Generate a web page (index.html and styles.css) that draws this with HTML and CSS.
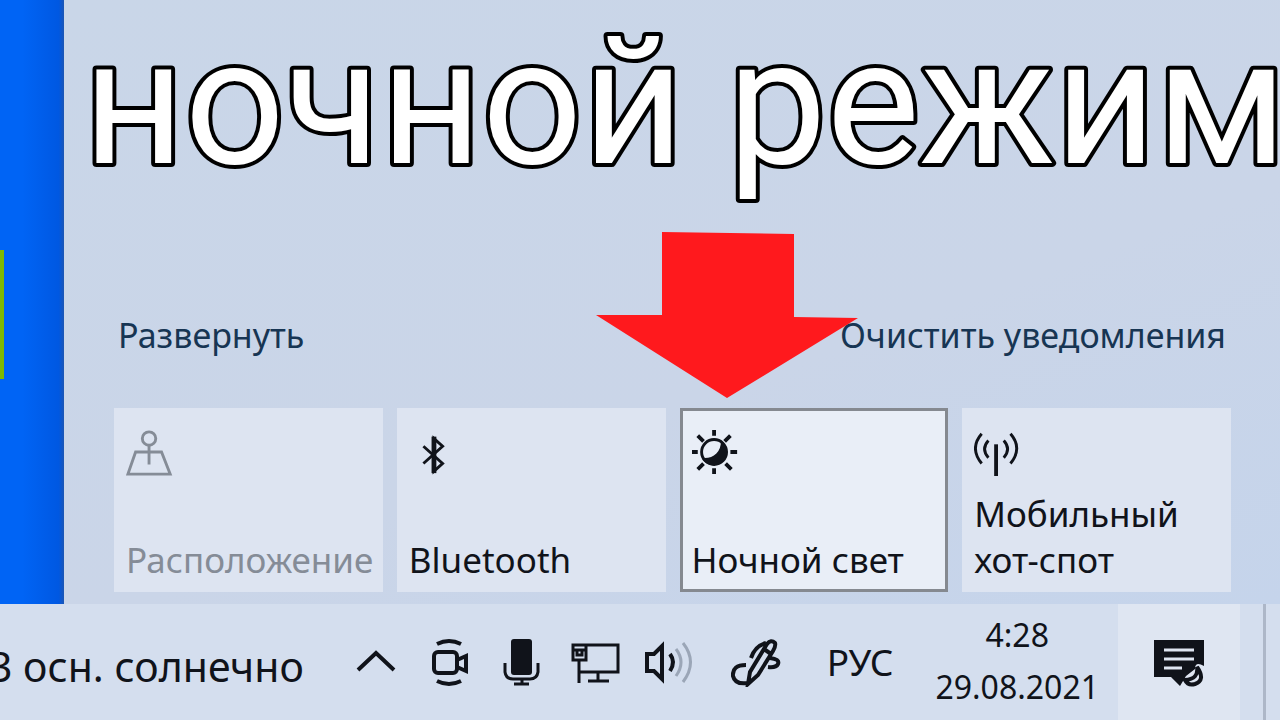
FILE: index.html
```html
<!DOCTYPE html>
<html lang="ru">
<head>
<meta charset="utf-8">
<title>Ночной режим</title>
<link rel="stylesheet" href="styles.css">
</head>
<body>
<div class="screen">
  <main class="workspace">
    <div class="wallpaper"><span class="wallpaper-tile"></span></div>
    <section class="action-center">
      <h1 class="headline"><svg class="headline-art"><text x="0" y="163">ночной режим</text></svg></h1>
      <div class="links">
        <a href="#expand">Развернуть</a>
        <a href="#clear">Очистить уведомления</a>
      </div>
      <div class="tiles">
        <button class="tile tile-disabled" type="button" disabled>
          <svg class="tile-icon" viewBox="0 0 50 50" fill="none" stroke="currentColor" stroke-width="3"><circle cx="24" cy="11" r="7"/><path d="M24 18v20M15 25h-5L2 48h44L37 25H15"/></svg>
          <span>Расположение</span>
        </button>
        <button class="tile" type="button">
          <svg class="tile-icon" viewBox="0 0 50 50" fill="none" stroke="currentColor" stroke-width="3"><path d="M15 19l20 18-9 8V11l9 8-20 18"/><path d="M26 9v38" stroke-width="5"/></svg>
          <span>Bluetooth</span>
        </button>
        <button class="tile tile-active" type="button">
          <svg class="tile-icon" viewBox="0 0 50 50" fill="none" stroke="currentColor" stroke-width="3"><circle cx="23" cy="25" r="13" stroke-width="3"/><path d="M30 13a14 14 0 1 1-20 18c10 2 21-5 20-18z" fill="currentColor" stroke="none"/><path d="M23 2v6M23 42v6M0 25h6M40 25h7M6 8l6 6M35 37l6 6M40 8l-6 6M12 37l-6 6" stroke-width="4"/></svg>
          <span>Ночной свет</span>
        </button>
        <button class="tile" type="button">
          <svg class="tile-icon" viewBox="0 0 50 50" fill="none" stroke="currentColor" stroke-width="3"><path d="M23 17v33" stroke-width="4"/><path d="M15 13q-8 9 0 18M31 13q8 9 0 18M8 6q-13 15 0 31M38 6q13 15 0 31"/></svg>
          <span>Мобильный<br>хот-спот</span>
        </button>
      </div>
      <svg class="arrow" viewBox="0 0 262 168" aria-hidden="true"><path d="M66 1l132 2v83l64 1-131 80L0 84h66z" fill="#ff191d"/></svg>
    </section>
  </main>
  <footer class="taskbar">
    <button class="weather" type="button">3 осн. солнечно</button>
    <div class="tray">
      <button type="button" aria-label="Скрытые значки"><svg viewBox="0 0 50 50" fill="none" stroke="currentColor" stroke-width="4"><path d="M7 33l18-17 18 17"/></svg></button>
      <button type="button" aria-label="Камера"><svg viewBox="0 0 50 50" fill="none" stroke="currentColor" stroke-width="4"><rect x="10" y="15" width="23" height="21" rx="4"/><path d="M33 23l9-4v15l-9-4"/><path d="M13 7q12-6 24 0M13 44q12 6 24 0"/></svg></button>
      <button type="button" aria-label="Микрофон"><svg viewBox="0 0 50 50" fill="none" stroke="currentColor" stroke-width="3"><rect x="14" y="2" width="21" height="36" rx="3" fill="currentColor" stroke="none"/><path d="M8 26v9q1 7 8 7h17q7 0 8-7v-9M25 42v6M17 47h15"/></svg></button>
      <button type="button" aria-label="Сеть"><svg viewBox="0 0 50 50" fill="none" stroke="currentColor" stroke-width="3"><path d="M16 8h32v27H10M28 35v9M18 44h21M9 24v22M3 8h13v15H3zM3 13h13M7 14v4h5v-4"/></svg></button>
      <button type="button" aria-label="Громкость"><svg viewBox="0 0 50 50" fill="none" stroke="currentColor" stroke-width="4"><path d="M4 17h7l8-8v33l-8-8H4zM27 17q6 8 0 17"/><path d="M33 12q10 13 0 27M40 6q15 19 0 39" stroke="#9ba6b7" stroke-width="3"/></svg></button>
      <button class="ink" type="button" aria-label="Windows Ink"><svg viewBox="0 0 50 50" fill="none" stroke="currentColor" stroke-width="4"><path d="M17 47l2-12L36 7q4-5 8-1 1 3-2 8L27 38zM33 12l7 5M35 6q-11 3-15 15M15 28Q1 28 2 39q2 9 15 7M39 21q10 1 8 6-2 4-10 3"/></svg></button>
      <button class="language" type="button">РУС</button>
      <button class="clock" type="button"><time>4:28</time><time>29.08.2021</time></button>
      <button class="notifications" type="button" aria-label="Уведомления"><svg viewBox="0 0 50 50"><path d="M0 3h50v26q-9-5-9 3l-9 7-6 10-9-9H0z" fill="currentColor"/><path d="M10 13h30M10 22h30M10 31h18" stroke="#dfe6f2" stroke-width="3"/><path d="M43 30q9 13-2 17-7 2-10-4 14-1 12-13z" fill="#dfe6f2" stroke="currentColor" stroke-width="4"/></svg></button>
      <span class="peek"></span>
    </div>
  </footer>
</div>
</body>
</html>
```
FILE: styles.css
```css
* { box-sizing: border-box; }
body {
  margin: 0;
  font-family: "Noto Sans", "Open Sans", sans-serif;
  font-size: 34px;
  line-height: 46px;
  color: #10131a;
}
button {
  border: 0;
  padding: 0;
  background: none;
  font: inherit;
  color: inherit;
}
svg { display: block; width: 50px; height: 50px; }
.screen {
  min-height: 100vh;
  display: flex;
  flex-direction: column;
  overflow: hidden;
}
.workspace { flex: 1; display: flex; }
.wallpaper {
  flex: 0 0 64px;
  background: linear-gradient(90deg, #0064f5 0 35%, #0058e2 92%, #1c56b4);
  padding-top: 250px;
}
.wallpaper-tile { display: block; width: 4px; height: 129px; background: #7eb900; }
.action-center {
  position: relative;
  flex: 1;
  min-width: 0;
  display: flex;
  flex-direction: column;
  justify-content: space-between;
  padding: 0 49px 12px 50px;
  background: linear-gradient(160deg, #c9d6e8, #cad5e8 60%, #c5d4eb);
}
.headline {
  margin: 0 -49px 0 -31px;
  font-family: Roboto, sans-serif;
  font-weight: 400;
  font-size: 176px;
  line-height: 206px;
}
.headline-art {
  width: 100%;
  height: 206px;
  overflow: visible;
  fill: #fff;
  stroke: #000;
  stroke-width: 8px;
  stroke-linejoin: round;
  paint-order: stroke fill;
}
.links {
  display: flex;
  justify-content: space-between;
  margin: auto 5px 50px 4px;
}
.links a { color: #173553; text-decoration: none; }
.tiles {
  display: grid;
  grid-template-columns: repeat(4, 1fr);
  gap: 14px;
}
.tile {
  min-width: 0;
  height: 184px;
  display: flex;
  flex-direction: column;
  justify-content: space-between;
  align-items: flex-start;
  padding: 20px 8px 9px 12px;
  background: #dde4f1;
  font-size: 35px;
  text-align: left;
  white-space: nowrap;
}
.tile-disabled { color: #858c97; }
.tile-active { background: #e9eef7; border: 3px solid #858990; padding: 17px 5px 6px 9px; }
.tile-icon { width: 48px; height: 48px; flex: none; }
.arrow {
  position: absolute;
  left: 532px;
  top: 231px;
  width: 262px;
  height: 168px;
}
.taskbar {
  display: flex;
  justify-content: space-between;
  height: 116px;
  background: #d4deee;
}
.weather { margin-left: -11px; padding-top: 8px; font-size: 41px; white-space: nowrap; }
.tray { display: flex; align-items: center; gap: 23px; }
.ink { margin-left: 15px; }
.language { margin-left: 23px; font-size: 37px; }
.clock {
  display: flex;
  flex-direction: column;
  margin: 0 0 2px 19px;
  font-size: 32px;
  line-height: 52px;
  text-align: center;
}
.notifications {
  align-self: stretch;
  width: 122px;
  margin-left: -4px;
  padding: 0 36px;
  background: #dfe6f2;
}
.peek { align-self: stretch; width: 17px; border-left: 3px solid #adb7c8; }
```
